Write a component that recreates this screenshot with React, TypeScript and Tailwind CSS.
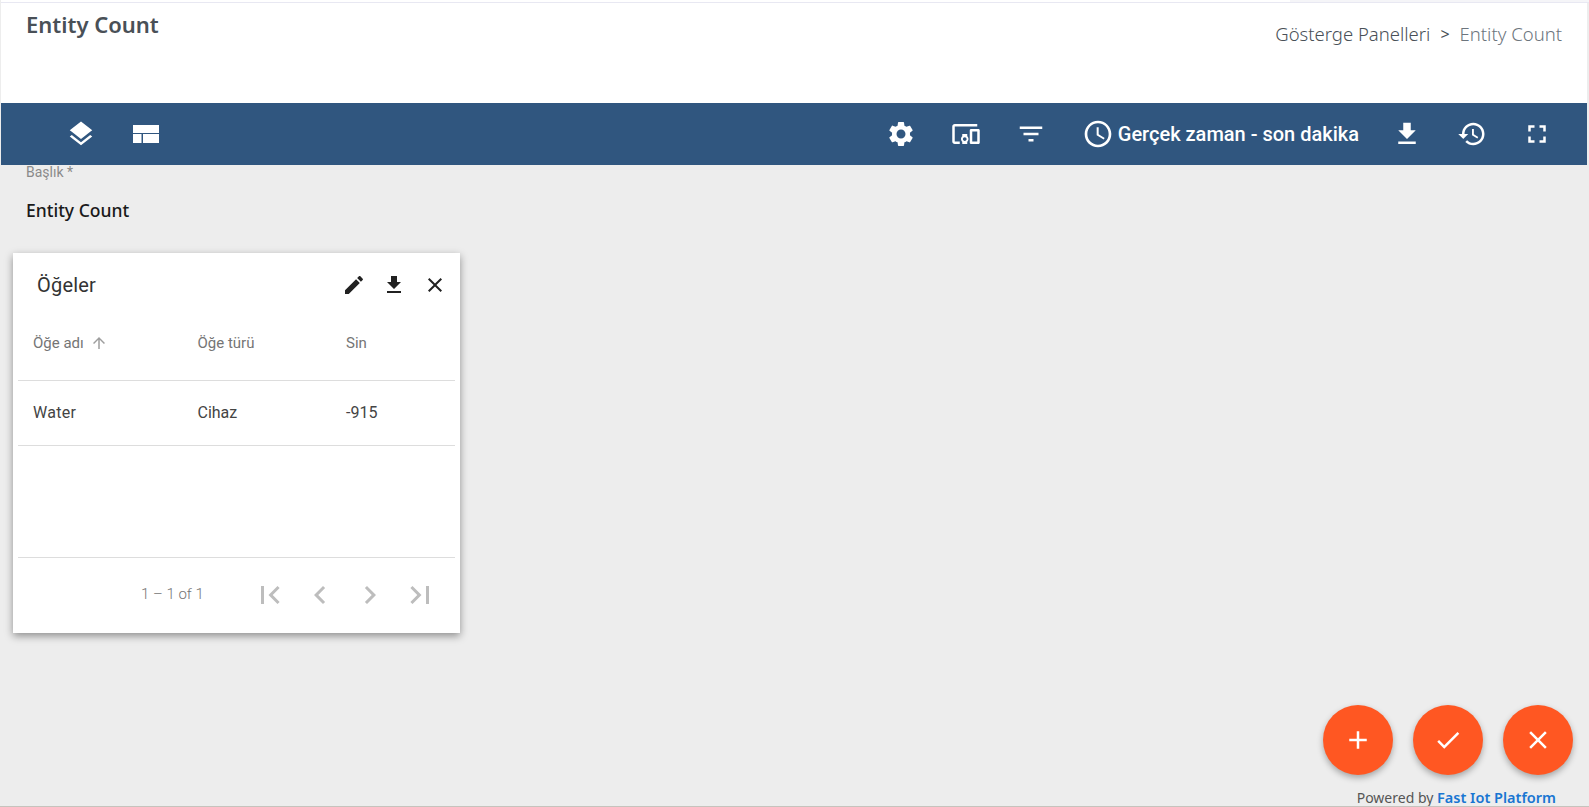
const paths = {
  layers: "M11.99 18.54l-7.37-5.73L3 14.07l9 7 9-7-1.63-1.27-7.38 5.74zM12 16l7.36-5.73L21 9l-9-7-9 7 1.63 1.27L12 16z",
  settings:
    "M19.14,12.94c0.04-0.3,0.06-0.61,0.06-0.94c0-0.32-0.02-0.64-0.07-0.94l2.03-1.58c0.18-0.14,0.23-0.41,0.12-0.61 l-1.92-3.32c-0.12-0.22-0.37-0.29-0.59-0.22l-2.39,0.96c-0.5-0.38-1.03-0.7-1.62-0.94L14.4,2.81c-0.04-0.24-0.24-0.41-0.48-0.41 h-3.84c-0.24,0-0.43,0.17-0.47,0.41L9.25,5.35C8.66,5.59,8.12,5.92,7.63,6.29L5.24,5.33c-0.22-0.08-0.47,0-0.59,0.22L2.74,8.87 C2.62,9.08,2.66,9.34,2.86,9.48l2.03,1.58C4.84,11.36,4.8,11.69,4.8,12s0.02,0.64,0.07,0.94l-2.03,1.58 c-0.18,0.14-0.23,0.41-0.12,0.61l1.92,3.32c0.12,0.22,0.37,0.29,0.59,0.22l2.39-0.96c0.5,0.38,1.03,0.7,1.62,0.94l0.36,2.54 c0.05,0.24,0.24,0.41,0.48,0.41h3.84c0.24,0,0.44-0.17,0.47-0.41l0.36-2.54c0.59-0.24,1.13-0.56,1.62-0.94l2.39,0.96 c0.22,0.08,0.47,0,0.59-0.22l1.92-3.32c0.12-0.22,0.07-0.47-0.12-0.61L19.14,12.94z M12,15.6c-1.98,0-3.6-1.62-3.6-3.6 s1.62-3.6,3.6-3.6s3.6,1.62,3.6,3.6S13.98,15.6,12,15.6z",
  devices:
    "M3 6h18V4H3c-1.1 0-2 .9-2 2v12c0 1.1.9 2 2 2h4v-2H3V6zm10 6H9v1.78c-.61.55-1 1.33-1 2.22s.39 1.67 1 2.22V20h4v-1.78c.61-.55 1-1.34 1-2.22s-.39-1.67-1-2.22V12zm-2 5.5c-.83 0-1.5-.67-1.5-1.5s.67-1.5 1.5-1.5 1.5.67 1.5 1.5-.67 1.5-1.5 1.5zM22 8h-6c-.5 0-1 .5-1 1v10c0 .5.5 1 1 1h6c.5 0 1-.5 1-1V9c0-.5-.5-1-1-1zm-1 10h-4v-8h4v8z",
  filter: "M10 18h4v-2h-4v2zM3 6v2h18V6H3zm3 7h12v-2H6v2z",
  clock:
    "M11.99 2C6.47 2 2 6.48 2 12s4.47 10 9.99 10C17.52 22 22 17.52 22 12S17.52 2 11.99 2zM12 20c-4.42 0-8-3.58-8-8s3.58-8 8-8 8 3.58 8 8-3.58 8-8 8zM12.5 7H11v6l5.25 3.15.75-1.23-4.5-2.67z",
  download: "M19 9h-4V3H9v6H5l7 7 7-7zM5 18v2h14v-2H5z",
  history:
    "M13 3c-4.97 0-9 4.03-9 9H1l3.89 3.89.07.14L9 12H6c0-3.87 3.13-7 7-7s7 3.13 7 7-3.13 7-7 7c-1.93 0-3.68-.79-4.94-2.06l-1.42 1.42C8.27 19.99 10.51 21 13 21c4.97 0 9-4.03 9-9s-4.03-9-9-9zm-1 5v5l4.28 2.54.72-1.21-3.5-2.08V8H12z",
  fullscreen: "M7 14H5v5h5v-2H7v-3zm-2-4h2V7h3V5H5v5zm12 7h-3v2h5v-5h-2v3zM14 5v2h3v3h2V5h-5z",
  edit: "M3 17.25V21h3.75L17.81 9.94l-3.75-3.75L3 17.25zM20.71 7.04c.39-.39.39-1.02 0-1.41l-2.34-2.34c-.39-.39-1.02-.39-1.41 0l-1.83 1.83 3.75 3.75 1.83-1.83z",
  close: "M19 6.41L17.59 5 12 10.59 6.41 5 5 6.41 10.59 12 5 17.59 6.41 19 12 13.41 17.59 19 19 17.59 13.41 12z",
  arrowUp: "M4 12l1.41 1.41L11 7.83V20h2V7.83l5.58 5.59L20 12l-8-8-8 8z",
  first: "M18.41 16.59L13.82 12l4.59-4.59L17 6l-6 6 6 6zM6 6h2v12H6z",
  prev: "M15.41 7.41L14 6l-6 6 6 6 1.41-1.41L10.83 12z",
  next: "M10 6L8.59 7.41 13.17 12l-4.58 4.59L10 18l6-6z",
  last: "M5.59 7.41L10.18 12l-4.59 4.59L7 18l6-6-6-6zM16 6h2v12h-2z",
  add: "M19 13h-6v6h-2v-6H5v-2h6V5h2v6h6v2z",
  check: "M9 16.17L4.83 12l-1.42 1.41L9 19 21 7l-1.41-1.41z",
};

function Icon({ name, className }: { name: keyof typeof paths; className: string }) {
  return (
    <svg viewBox="0 0 24 24" fill="currentColor" className={className}>
      <path d={paths[name]} />
    </svg>
  );
}

function Toolbar() {
  return (
    <div className="mr-[2px] flex h-[62px] items-center bg-[#30567f] pr-[35px] pl-[65px] text-white">
      <Icon name="layers" className="h-[30px] w-[30px]" />
      <svg viewBox="0 0 26 18" fill="currentColor" className="ml-[37px] h-[18px] w-[26px]">
        <path d="M0 0h26v8H0zM0 9h8.5v9H0zM10 9h16v9H10z" />
      </svg>
      <div className="ml-auto flex items-center">
        <Icon name="settings" className="h-[30px] w-[30px]" />
        <Icon name="devices" className="ml-[35px] h-[30px] w-[30px]" />
        <Icon name="filter" className="ml-[35px] h-[30px] w-[30px]" />
        <Icon name="clock" className="ml-[36px] h-[32px] w-[32px]" />
        <span className="ml-[4px] text-[20px] font-medium">Gerçek zaman - son dakika</span>
        <Icon name="download" className="ml-[33px] h-[30px] w-[30px]" />
        <Icon name="history" className="ml-[35px] h-[30px] w-[30px]" />
        <Icon name="fullscreen" className="ml-[35px] h-[30px] w-[30px]" />
      </div>
    </div>
  );
}

function ItemsCard() {
  return (
    <div className="mt-[33px] ml-[12px] flex h-[380px] w-[447px] flex-col bg-white shadow-[0_3px_8px_rgba(0,0,0,0.4)]">
      <div className="flex h-[63px] shrink-0 items-center pr-[13px] pl-[24px] text-[#212121]">
        <span className="text-[20px] tracking-[0.2px] text-[#333333]">Öğeler</span>
        <Icon name="edit" className="ml-auto h-[24px] w-[24px]" />
        <Icon name="download" className="ml-[16px] h-[24px] w-[24px]" />
        <Icon name="close" className="ml-[17px] h-[24px] w-[24px]" />
      </div>
      <div className="mx-[5px] flex grow flex-col">
        <div className="flex h-[65px] items-center border-b border-[#dddddd] pb-[10px] pl-[15px] text-[15px] text-[#757575]">
          <span className="flex w-[164.5px] items-center">
            Öğe adı
            <Icon name="arrowUp" className="ml-[6px] h-[18px] w-[18px] text-[#9e9e9e]" />
          </span>
          <span className="w-[148.5px]">Öğe türü</span>
          <span>Sin</span>
        </div>
        <div className="flex h-[65px] items-center border-b border-[#dddddd] pl-[15px] text-[16px] text-[#444444]">
          <span className="w-[164.5px] tracking-[0.3px]">Water</span>
          <span className="w-[148.5px]">Cihaz</span>
          <span>-915</span>
        </div>
        <div className="h-[112px] border-b border-[#dddddd]" />
        <div className="flex h-[75px] items-center pl-[123px] text-[15px] font-light text-[#757575]">
          <span className="mb-[3px]">1 – 1 of 1</span>
          <div className="mb-[2px] ml-[48px] flex text-[#bdbdbd]">
            <Icon name="first" className="h-[36px] w-[36px]" />
            <Icon name="prev" className="ml-[14px] h-[36px] w-[36px]" />
            <Icon name="next" className="ml-[14px] h-[36px] w-[36px]" />
            <Icon name="last" className="ml-[14px] h-[36px] w-[36px]" />
          </div>
        </div>
      </div>
    </div>
  );
}

export default function App() {
  return (
    <div className="relative flex h-[807px] flex-col overflow-hidden border-b border-[#c6c3bd] bg-[#ededed] pl-[1px] font-['Roboto',sans-serif]">
      <div className="flex h-[3px] shrink-0 border-b border-[#e8e8f2] bg-white">
        <div className="ml-auto w-[299px] bg-[#f5f5f8]" />
      </div>
      <div className="mr-[2px] flex h-[100px] shrink-0 justify-between bg-white pr-[25px] pl-[25px] font-['Noto_Sans',sans-serif]">
        <h1 className="mt-[7px] text-[22px] leading-[28px] font-semibold text-[#495057]">Entity Count</h1>
        <div className="mt-[19px] flex h-[24px] items-center text-[18.5px] font-light text-[#495057]">
          Gösterge Panelleri
          <span className="mx-[10px] text-[16px] font-normal">&gt;</span>
          <span className="text-[#6c757d]">Entity Count</span>
        </div>
      </div>
      <Toolbar />
      <div className="flex grow flex-col">
        <div className="pl-[25px] text-[14px] leading-[15px] text-[#8a8a8a]">Başlık *</div>
        <div className="mt-[20px] pl-[25px] font-['Noto_Sans',sans-serif] text-[17.5px] leading-[20px] font-medium text-[#1a1a1a]">Entity Count</div>
        <ItemsCard />
      </div>
      <div className="absolute right-[16px] bottom-[31px] flex gap-[20px]">
        {(["add", "check", "close"] as const).map((name) => (
          <div
            key={name}
            className="flex h-[70px] w-[70px] items-center justify-center rounded-full bg-[#ff5722] text-white shadow-[0_3px_6px_rgba(0,0,0,0.3)]"
          >
            <Icon name={name} className="h-[30px] w-[30px]" />
          </div>
        ))}
      </div>
      <div className="absolute right-[33px] bottom-0 font-['Noto_Sans',sans-serif] text-[14px] leading-[16px] text-[#555555]">
        Powered by <span className="text-[14.5px] font-semibold text-[#1976d2]">Fast Iot Platform</span>
      </div>
    </div>
  );
}
